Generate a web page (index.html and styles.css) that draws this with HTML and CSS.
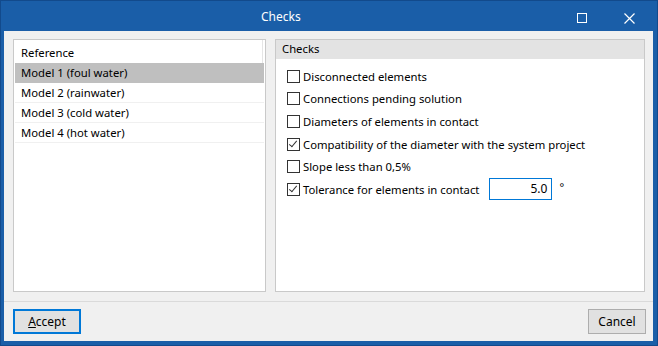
FILE: index.html
```html
<!DOCTYPE html>
<html lang="en">
<head>
    <meta charset="UTF-8">
    <title>Checks</title>
    <link rel="stylesheet" href="styles.css">
</head>
<body>
    <div class="window">
        <div class="titlebar">
            <span class="title">Checks</span>
            <svg class="btn-max" width="10" height="10" viewBox="0 0 10 10">
                <rect x="0.5" y="0.5" width="9" height="9" fill="none" stroke="#fff" stroke-width="1"/>
            </svg>
            <svg class="btn-close" width="11" height="11" viewBox="0 0 11 11">
                <path d="M0.5 0.5 L10.5 10.5 M10.5 0.5 L0.5 10.5" stroke="#fff" stroke-width="1.2"/>
            </svg>
        </div>

        <div class="content">
            <div class="main">
                <!-- Список моделей -->
                <div class="panel list-panel">
                    <div class="list-header">Reference</div>
                    <div class="list-row selected">Model 1 (foul water)</div>
                    <div class="list-row">Model 2 (rainwater)</div>
                    <div class="list-row">Model 3 (cold water)</div>
                    <div class="list-row">Model 4 (hot water)</div>
                </div>

                <!-- Проверки -->
                <div class="panel checks-panel">
                    <div class="checks-header">Checks</div>
                    <div class="checks-body">
                        <label class="check-row"><span class="box"></span>Disconnected elements</label>
                        <label class="check-row"><span class="box"></span>Connections pending solution</label>
                        <label class="check-row"><span class="box"></span>Diameters of elements in contact</label>
                        <label class="check-row"><span class="box checked"></span>Compatibility of the diameter with the system project</label>
                        <label class="check-row"><span class="box"></span>Slope less than 0,5%</label>
                        <label class="check-row"><span class="box checked"></span>Tolerance for elements in contact
                            <span class="value-input">5.0</span><span class="unit">°</span>
                        </label>
                    </div>
                </div>
            </div>

            <div class="footer">
                <button class="btn btn-default"><u>A</u>ccept</button>
                <button class="btn">Cancel</button>
            </div>
        </div>
    </div>
</body>
</html>
```

FILE: styles.css
```css
/* Общие стили */
html, body {
    margin: 0;
    padding: 0;
}

body {
    width: 658px;
    height: 346px;
    font-family: 'Noto Sans', 'Liberation Sans', sans-serif;
    font-size: 11.3px;
    color: #000;
    overflow: hidden;
}

.window {
    box-sizing: border-box;
    width: 658px;
    height: 346px;
    display: flex;
    flex-direction: column;
    background: #1a5ea8;
    border: 1px solid #124a8c;
    padding: 0 4px 4px 3px;
}

/* Заголовок окна */
.titlebar {
    height: 30px;
    position: relative;
    color: #fff;
    font-size: 12px;
}

.title {
    position: absolute;
    left: 257px;
    top: 7px;
}

.btn-max {
    position: absolute;
    left: 573px;
    top: 12px;
}

.btn-close {
    position: absolute;
    left: 620px;
    top: 12px;
}

.content {
    flex: 1;
    display: flex;
    flex-direction: column;
    background: #f0f0f0;
}

.main {
    display: flex;
    gap: 9px;
    padding: 8px 8px 0 9px;
    height: 253px;
}

.panel {
    box-sizing: border-box;
    border: 1px solid #c9c9c9;
    background: #fff;
}

/* Левая панель */
.list-panel {
    width: 253px;
    padding: 0 1px;
}

.list-header {
    height: 23px;
    line-height: 25px;
    padding-left: 6px;
    border-right: 1px solid #e5e5e5;
    margin-right: 1px;
}

.list-row {
    height: 19px;
    line-height: 19px;
    padding-left: 6px;
    border-bottom: 1px solid #f0f0f0;
}

.list-row.selected {
    background: #bfbfbf;
    border-bottom-color: #bfbfbf;
}

/* Правая панель */
.checks-panel {
    width: 370px;
}

.checks-header {
    height: 19px;
    line-height: 18px;
    padding-left: 6px;
    background: #e3e3e3;
}

.checks-body {
    padding: 6px 0 0 11px;
}

.check-row {
    display: flex;
    align-items: center;
    height: 22.6px;
}

.box {
    box-sizing: border-box;
    width: 13px;
    height: 13px;
    border: 1px solid #333;
    background: #fff;
    margin-right: 3px;
    position: relative;
}

.box.checked::after {
    content: '';
    position: absolute;
    left: 3px;
    top: 0px;
    width: 3px;
    height: 7px;
    border: solid #333;
    border-width: 0 1px 1px 0;
    transform: rotate(40deg);
}

.value-input {
    box-sizing: border-box;
    width: 63px;
    height: 22px;
    margin-left: 10px;
    border: 1px solid #0078d7;
    text-align: right;
    padding-right: 4px;
    line-height: 20px;
    font-size: 12px;
}

.unit {
    margin-left: 7px;
    font-size: 11px;
    position: relative;
    top: -3px;
}

/* Кнопки внизу */
.footer {
    flex: 1;
    display: flex;
    justify-content: space-between;
    align-items: flex-start;
    margin-top: 9px;
    border-top: 1px solid #dadada;
    padding: 7px 7px 0 9px;
}

.btn {
    box-sizing: border-box;
    height: 25px;
    min-width: 58px;
    padding: 0 8px;
    background: #e1e1e1;
    border: 1px solid #adadad;
    font-family: inherit;
    font-size: 12px;
    color: #000;
}

.btn-default {
    width: 68px;
    border: 2px solid #0078d7;
}
```
